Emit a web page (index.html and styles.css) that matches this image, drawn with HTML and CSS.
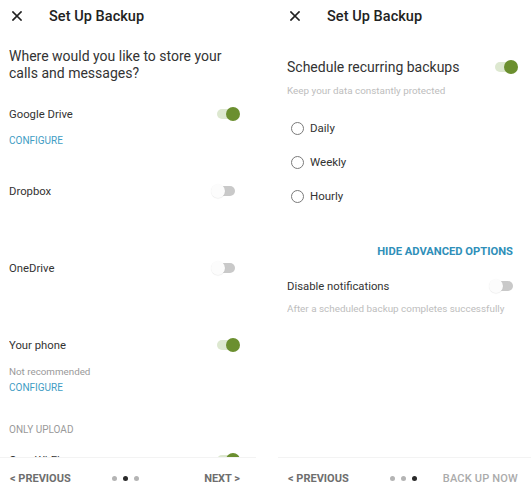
FILE: index.html
```html
<!DOCTYPE html>
<html>
<head>
<meta charset="utf-8">
<link rel="stylesheet" href="styles.css">
</head>
<body>
<div class="screens">
  <section class="panel">
    <header class="bar">
      <svg class="close" width="10" height="10" viewBox="0 0 10 10"><path d="M1 1L9 9M9 1L1 9" stroke="#222" stroke-width="1.7" stroke-linecap="square"/></svg>
      <h1 class="title">Set Up Backup</h1>
    </header>
    <div class="content">
      <p class="question">Where would you like to store your calls and messages?</p>
      <div class="provider first">
        <div class="row"><span class="label">Google Drive</span><span class="toggle on"><i></i></span></div>
        <div class="line link">CONFIGURE</div>
      </div>
      <div class="provider">
        <div class="row"><span class="label">Dropbox</span><span class="toggle"><i></i></span></div>
        <div class="line"></div>
      </div>
      <div class="provider">
        <div class="row"><span class="label">OneDrive</span><span class="toggle"><i></i></span></div>
        <div class="line"></div>
      </div>
      <div class="provider">
        <div class="row"><span class="label">Your phone</span><span class="toggle on"><i></i></span></div>
        <div class="line note">Not recommended</div>
        <div class="line link">CONFIGURE</div>
      </div>
      <div class="line section">ONLY UPLOAD</div>
      <div class="row wifi"><span class="label">Over Wi-Fi</span><span class="toggle on"><i></i></span></div>
    </div>
    <footer class="foot">
      <span class="nav">&lt; PREVIOUS</span>
      <span class="dots"><b></b><b class="cur"></b><b></b></span>
      <span class="nav end">NEXT &gt;</span>
    </footer>
  </section>

  <section class="panel">
    <header class="bar">
      <svg class="close" width="10" height="10" viewBox="0 0 10 10"><path d="M1 1L9 9M9 1L1 9" stroke="#222" stroke-width="1.7" stroke-linecap="square"/></svg>
      <h1 class="title">Set Up Backup</h1>
    </header>
    <div class="content">
      <div class="row sched"><span class="big">Schedule recurring backups</span><span class="toggle on"><i></i></span></div>
      <div class="hint keep">Keep your data constantly protected</div>
      <div class="radios">
        <label class="radio"><span class="circle"></span>Daily</label>
        <label class="radio"><span class="circle"></span>Weekly</label>
        <label class="radio"><span class="circle"></span>Hourly</label>
      </div>
      <div class="advanced">HIDE ADVANCED OPTIONS</div>
      <div class="row notif"><span class="label">Disable notifications</span><span class="toggle"><i></i></span></div>
      <div class="hint after">After a scheduled backup completes successfully</div>
    </div>
    <footer class="foot">
      <span class="nav">&lt; PREVIOUS</span>
      <span class="dots"><b></b><b></b><b class="cur"></b></span>
      <span class="nav end disabled">BACK UP NOW</span>
    </footer>
  </section>
</div>
</body>
</html>
```

FILE: styles.css
```css
* { box-sizing: border-box; }
html, body { margin: 0; padding: 0; background: #fff; }
body {
  width: 531px;
  height: 500px;
  overflow: hidden;
  font-family: Roboto, "Liberation Sans", sans-serif;
  color: #333;
}
.screens {
  display: flex;
  gap: 22px;
  height: 500px;
}
.panel {
  flex: 0 0 256px;
  height: 500px;
  display: flex;
  flex-direction: column;
  padding: 0 16px 0 9px;
}
.bar {
  height: 32px;
  flex: 0 0 32px;
  display: flex;
  align-items: center;
  padding-left: 3px;
}
.close { display: block; flex: 0 0 10px; }
.title {
  margin: 0 0 0 27px;
  font-size: 14.5px;
  font-weight: 500;
  color: #222;
  letter-spacing: 0.05px;
}
.content {
  flex: 1;
  overflow: hidden;
}
.question {
  margin: 16px 0 0;
  font-size: 14px;
  line-height: 17px;
  color: #333;
}
.row {
  height: 24px;
  display: flex;
  align-items: center;
  justify-content: space-between;
}
.label { font-size: 11.3px; color: #333; }
.provider { margin-top: 30px; }
.provider.first { margin-top: 20px; }
.provider .row { margin-bottom: 7px; }
.line { height: 16px; line-height: 16px; font-size: 10px; }
.link { color: #3f9dc4; }
.note { color: #9a9a9a; font-size: 9.8px; }
.section { color: #9a9a9a; margin-top: 26px; }
.wifi { margin-top: 10px; }

.toggle {
  position: relative;
  width: 29px;
  height: 16px;
  flex: 0 0 29px;
}
.toggle::before {
  content: "";
  position: absolute;
  left: 6px;
  top: 3px;
  width: 18px;
  height: 10px;
  border-radius: 5px;
  background: #c9c9c9;
}
.toggle i {
  position: absolute;
  left: 0;
  top: 1px;
  width: 14px;
  height: 14px;
  border-radius: 50%;
  background: #fcfcfc;
  box-shadow: 0 0.5px 1px rgba(0,0,0,0.1);
}
.toggle.on::before { background: #dde8d0; }
.toggle.on i { left: 15px; background: #6b8f2f; box-shadow: none; }

.sched { margin-top: 23px; }
.big { font-size: 14px; color: #333; }
.hint { font-size: 9.9px; color: #bdbdbd; height: 14px; line-height: 14px; }
.keep { margin-top: 5px; }
.radios { margin-top: 18px; display: flex; flex-direction: column; gap: 10px; }
.radio {
  height: 24px;
  display: flex;
  align-items: center;
  font-size: 11.5px;
  color: #333;
}
.circle {
  width: 13px;
  height: 13px;
  border: 1.5px solid #7a7a7a;
  border-radius: 50%;
  margin: 0 6px 0 4px;
}
.advanced {
  margin-top: 36px;
  height: 16px;
  line-height: 16px;
  text-align: right;
  padding-right: 5px;
  font-size: 11.2px;
  font-weight: 700;
  color: #2f8fb9;
}
.notif { margin-top: 14px; }
.after { margin-top: 4px; }

.foot {
  flex: 0 0 43px;
  height: 43px;
  margin: 0 -16px 0 -9px;
  padding: 0 16px 2px 10px;
  border-top: 1px solid #f3f3f3;
  display: grid;
  grid-template-columns: 1fr auto 1fr;
  align-items: center;
}
.nav {
  font-size: 11px;
  font-weight: 700;
  color: #6e6e6e;
}
.nav.end { justify-self: end; }
.nav.disabled { color: #ababab; font-weight: 500; letter-spacing: 0.2px; }
.dots { display: flex; gap: 6px; }
.dots b {
  display: block;
  width: 5px;
  height: 5px;
  border-radius: 50%;
  background: #b4b4b4;
}
.dots b.cur { background: #2a2a2a; }
```
